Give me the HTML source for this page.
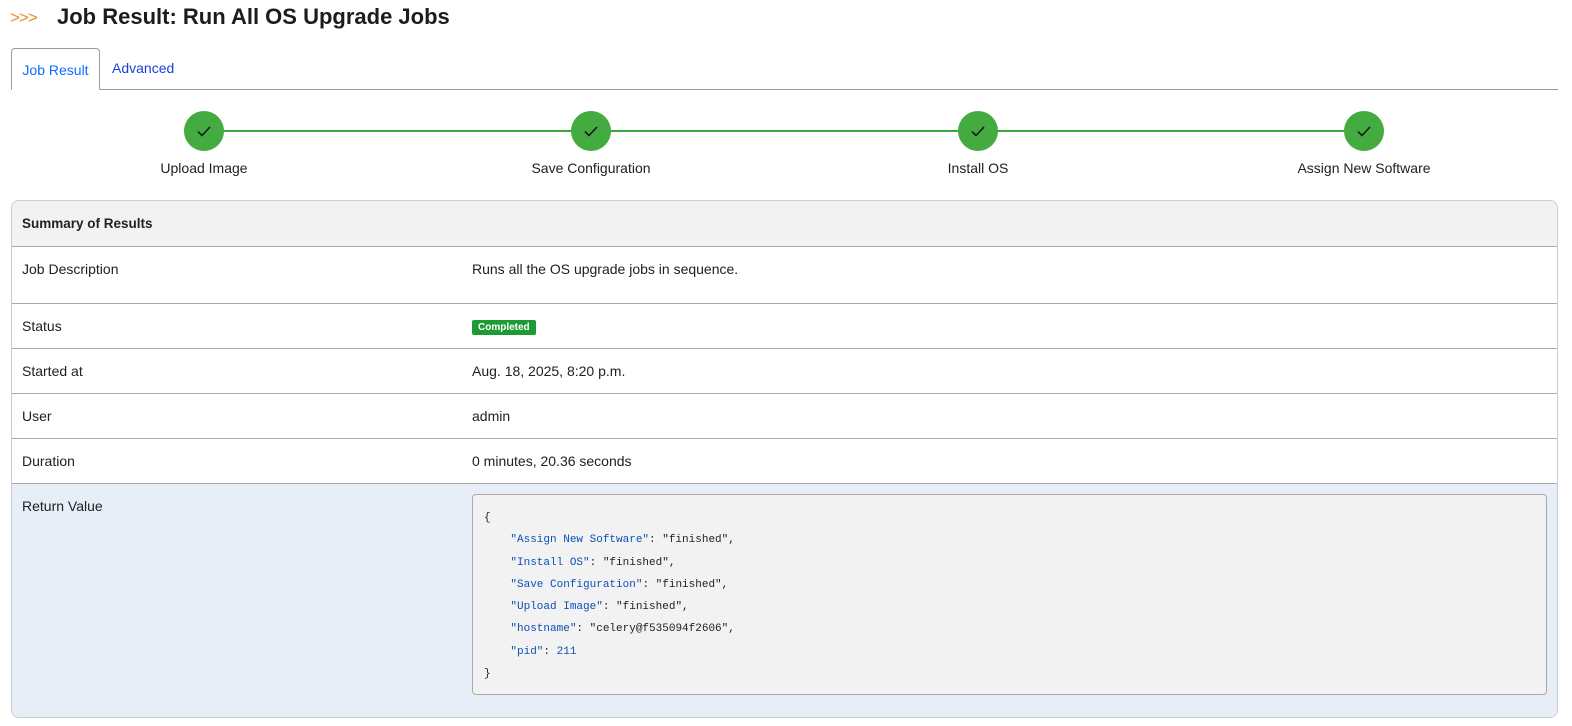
<!DOCTYPE html>
<html><head><style>
*{box-sizing:border-box;margin:0;padding:0}
body{width:1572px;height:726px;background:#fff;font-family:"Liberation Sans",sans-serif;font-size:14px;color:#212121;position:relative;overflow:hidden}
.abs{position:absolute}
h1{position:absolute;left:57px;top:4px;font-size:22px;font-weight:bold;color:#1c1c1c;letter-spacing:0}
.arr{left:10px;top:8px;color:#f0882a;font-size:17px;letter-spacing:-1px}
.tabline{left:11px;width:1547px;top:89px;height:1px;background:#999}
.tab{left:11px;top:48px;width:89px;height:42px;border:1px solid #999;border-bottom:1px solid #fff;border-radius:4px 4px 0 0;background:#fff;color:#0d6efd;padding-top:13px;text-align:center}
.adv{left:112px;top:60px;color:#1a3fd8}
.line{top:130px;left:204px;width:1160px;height:2px;background:#3aa53a}
.c{width:40px;height:40px;border-radius:50%;background:#43ab3f;top:111px}
.c svg{position:absolute;left:12px;top:13px}
.lbl{top:160px;width:200px;text-align:center}
.card{left:11px;top:200px;width:1547px;height:518px;border:1px solid #ccc;border-radius:8px;overflow:hidden}
.row{position:absolute;left:0;right:0;border-top:1px solid #aaa}
.row .k{position:absolute;left:10px;top:14px}
.row .v{position:absolute;left:460px;top:14px}
.badge{background:#1e9a34;color:#fff;font-size:10px;font-weight:bold;padding:2px 6px;border-radius:2px}
pre{position:absolute;left:460px;top:10px;width:1075px;height:201px;background:#f2f2f2;border:1px solid #aaa;border-radius:4px;font-family:"Liberation Mono",monospace;font-size:11px;line-height:22.3px;padding:12px 0 0 11px;color:#222}
.s{color:#0d4fb8}.n{color:#0d4fb8}
</style></head><body>
<div class="abs arr">&gt;&gt;&gt;</div>
<h1>Job Result: Run All OS Upgrade Jobs</h1>
<div class="abs tabline"></div>
<div class="abs tab">Job Result</div>
<div class="abs adv">Advanced</div>
<div class="abs line"></div>
<div class="abs c" style="left:184px"><svg width="16" height="14" viewBox="0 0 16 14"><path d="M2 7.5l4 4L14 3" fill="none" stroke="#1a1a1a" stroke-width="1.6"/></svg></div>
<div class="abs c" style="left:571px"><svg width="16" height="14" viewBox="0 0 16 14"><path d="M2 7.5l4 4L14 3" fill="none" stroke="#1a1a1a" stroke-width="1.6"/></svg></div>
<div class="abs c" style="left:958px"><svg width="16" height="14" viewBox="0 0 16 14"><path d="M2 7.5l4 4L14 3" fill="none" stroke="#1a1a1a" stroke-width="1.6"/></svg></div>
<div class="abs c" style="left:1344px"><svg width="16" height="14" viewBox="0 0 16 14"><path d="M2 7.5l4 4L14 3" fill="none" stroke="#1a1a1a" stroke-width="1.6"/></svg></div>
<div class="abs lbl" style="left:104px">Upload Image</div>
<div class="abs lbl" style="left:491px">Save Configuration</div>
<div class="abs lbl" style="left:878px">Install OS</div>
<div class="abs lbl" style="left:1264px">Assign New Software</div>
<div class="abs card">
 <div class="row" style="top:0;height:45px;background:#f2f2f2;border-top:none"><span class="k" style="font-weight:bold;font-size:13.5px;top:15px">Summary of Results</span></div>
 <div class="row" style="top:45px;height:57px"><span class="k">Job Description</span><span class="v">Runs all the OS upgrade jobs in sequence.</span></div>
 <div class="row" style="top:102px;height:45px"><span class="k">Status</span><span class="v" style="top:13px"><span class="badge">Completed</span></span></div>
 <div class="row" style="top:147px;height:45px"><span class="k">Started at</span><span class="v">Aug. 18, 2025, 8:20 p.m.</span></div>
 <div class="row" style="top:192px;height:45px"><span class="k">User</span><span class="v">admin</span></div>
 <div class="row" style="top:237px;height:45px"><span class="k">Duration</span><span class="v">0 minutes, 20.36 seconds</span></div>
 <div class="row" style="top:282px;bottom:0;background:#e8eef7"><span class="k">Return Value</span>
<pre>{
    <span class="s">"Assign New Software"</span>: "finished",
    <span class="s">"Install OS"</span>: "finished",
    <span class="s">"Save Configuration"</span>: "finished",
    <span class="s">"Upload Image"</span>: "finished",
    <span class="s">"hostname"</span>: "celery@f535094f2606",
    <span class="s">"pid"</span>: <span class="n">211</span>
}</pre></div>
</div>
</body></html>
